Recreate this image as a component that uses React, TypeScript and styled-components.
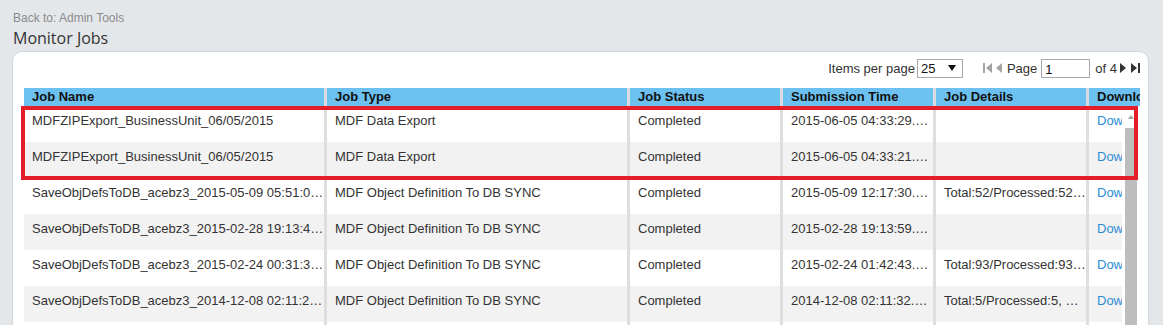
import React from 'react';
import styled, { createGlobalStyle } from 'styled-components';

const GlobalStyle = createGlobalStyle`
  html, body {
    margin: 0;
    padding: 0;
    height: 325px;
    overflow: hidden;
    background: #e4e7ea;
  }
`;

const COLUMNS = '303px 303px 153px 153px 153px 110px';

const Page = styled.div`
  padding: 11px 0 0 12px;
  font-family: "Liberation Sans", Arial, sans-serif;
`;

const BackLink = styled.div`
  font-size: 12px;
  line-height: 14px;
  color: #8b8b8b;
  margin-left: 1px;
`;

const Title = styled.h1`
  font-family: "Open Sans", "Liberation Sans", sans-serif;
  font-size: 16px;
  font-weight: 400;
  line-height: 20px;
  color: #333;
  margin: 3px 0 3px 1px;
`;

const Panel = styled.div`
  box-sizing: border-box;
  width: 1137px;
  height: 400px;
  background: #fff;
  border: 1px solid #d3d6da;
  border-radius: 10px 10px 0 0;
  padding: 5px 8px 0 11px;
`;

const Pager = styled.div`
  display: flex;
  justify-content: flex-end;
  align-items: center;
  height: 22px;
  margin-bottom: 9px;
  font-size: 13px;
  color: #333;
`;

const PagerText = styled.span<{ $ml?: number }>`
  margin-left: ${({ $ml = 0 }) => $ml}px;
`;

const Select = styled.div`
  box-sizing: border-box;
  width: 46px;
  height: 19px;
  margin-left: 2px;
  border: 1px solid #a9a9a9;
  display: flex;
  align-items: center;
  justify-content: space-between;
  padding: 0 6px 0 3px;
  font-size: 13px;
  color: #111;
`;

const Caret = styled.span`
  width: 0;
  height: 0;
  border-left: 4px solid transparent;
  border-right: 4px solid transparent;
  border-top: 6px solid #111;
`;

const PageInput = styled.div`
  box-sizing: border-box;
  width: 49px;
  height: 19px;
  margin-left: 4px;
  border: 1px solid #a9a9a9;
  padding: 2px 0 0 3px;
  font-size: 13px;
  line-height: 15px;
  color: #111;
`;

const NavIcon = styled.svg<{ $ml?: number }>`
  display: block;
  margin-left: ${({ $ml = 0 }) => $ml}px;
`;

const Table = styled.div`
  position: relative;
  width: 1116px;
`;

const HeaderRow = styled.div`
  display: grid;
  grid-template-columns: ${COLUMNS};
  height: 18px;
  overflow: hidden;
  background: #6cc1f0;
`;

const HeaderCell = styled.div`
  padding-left: 8px;
  font-size: 13px;
  font-weight: 700;
  line-height: 18px;
  color: #111;
  white-space: nowrap;
  overflow: hidden;
  &:not(:last-child) {
    border-right: 3px solid #d8dce0;
  }
`;

const BodyWrap = styled.div`
  display: flex;
`;

const Viewport = styled.div`
  width: 1098px;
  overflow: hidden;
`;

const BodyRow = styled.div<{ $alt: boolean }>`
  display: grid;
  grid-template-columns: ${COLUMNS};
  height: 36px;
  background: ${({ $alt }) => ($alt ? '#f2f2f2' : '#ffffff')};
`;

const BodyCell = styled.div`
  padding: 7px 0 0 8px;
  font-size: 13px;
  line-height: 15px;
  color: #333;
  white-space: nowrap;
  overflow: hidden;
  text-overflow: ellipsis;
  &:not(:last-child) {
    border-right: 3px solid #dedede;
  }
`;

const DownloadLink = styled.a`
  color: #2a8dd6;
  text-decoration: none;
`;

const Scrollbar = styled.div`
  width: 12px;
  margin: 0 3px 0 3px;
  display: flex;
  flex-direction: column;
`;

const ScrollArrow = styled.div`
  height: 22px;
  display: flex;
  justify-content: center;
  align-items: center;
  &::after {
    content: '';
    border-left: 3px solid transparent;
    border-right: 3px solid transparent;
    border-bottom: 4px solid #a5a5a5;
  }
`;

const Thumb = styled.div`
  flex: 1;
  background: #bdbdbd;
`;

const Highlight = styled.div`
  position: absolute;
  left: -3px;
  top: 18px;
  width: 1117px;
  height: 74px;
  box-sizing: border-box;
  border: 4px solid #e51d2a;
  pointer-events: none;
`;

interface Job {
  name: string;
  type: string;
  status: string;
  submitted: string;
  details: string;
}

const jobs: Job[] = [
  { name: 'MDFZIPExport_BusinessUnit_06/05/2015', type: 'MDF Data Export', status: 'Completed', submitted: '2015-06-05 04:33:29.183', details: '' },
  { name: 'MDFZIPExport_BusinessUnit_06/05/2015', type: 'MDF Data Export', status: 'Completed', submitted: '2015-06-05 04:33:21.547', details: '' },
  { name: 'SaveObjDefsToDB_acebz3_2015-05-09 05:51:07.216', type: 'MDF Object Definition To DB SYNC', status: 'Completed', submitted: '2015-05-09 12:17:30.423', details: 'Total:52/Processed:52, Failed:0' },
  { name: 'SaveObjDefsToDB_acebz3_2015-02-28 19:13:49.507', type: 'MDF Object Definition To DB SYNC', status: 'Completed', submitted: '2015-02-28 19:13:59.157', details: '' },
  { name: 'SaveObjDefsToDB_acebz3_2015-02-24 00:31:32.336', type: 'MDF Object Definition To DB SYNC', status: 'Completed', submitted: '2015-02-24 01:42:43.815', details: 'Total:93/Processed:93, Failed:0' },
  { name: 'SaveObjDefsToDB_acebz3_2014-12-08 02:11:22.754', type: 'MDF Object Definition To DB SYNC', status: 'Completed', submitted: '2014-12-08 02:11:32.176', details: 'Total:5/Processed:5, Failed:0' },
  { name: 'SaveObjDefsToDB_acebz3_2014-11-20 10:02:14.120', type: 'MDF Object Definition To DB SYNC', status: 'Completed', submitted: '2014-11-20 10:02:20.310', details: '' },
];

const headers = ['Job Name', 'Job Type', 'Job Status', 'Submission Time', 'Job Details', 'Download'];

export default function App() {
  return (
    <Page>
      <GlobalStyle />
      <BackLink>Back to: Admin Tools</BackLink>
      <Title>Monitor Jobs</Title>
      <Panel>
        <Pager>
          <PagerText>Items per page</PagerText>
          <Select>
            25
            <Caret />
          </Select>
          <NavIcon $ml={20} width="10" height="12" viewBox="0 0 10 12">
            <rect x="0" y="1" width="2" height="10" fill="#a3a3a3" />
            <polygon points="9,1 3,6 9,11" fill="#a3a3a3" />
          </NavIcon>
          <NavIcon $ml={2} width="8" height="12" viewBox="0 0 8 12">
            <polygon points="7,1 1,6 7,11" fill="#a3a3a3" />
          </NavIcon>
          <PagerText $ml={4}>Page</PagerText>
          <PageInput>1</PageInput>
          <PagerText $ml={5}>of 4</PagerText>
          <NavIcon $ml={2} width="8" height="12" viewBox="0 0 8 12">
            <polygon points="1,1 7,6 1,11" fill="#333" />
          </NavIcon>
          <NavIcon $ml={3} width="10" height="12" viewBox="0 0 10 12">
            <polygon points="1,1 7,6 1,11" fill="#333" />
            <rect x="8" y="1" width="2" height="10" fill="#333" />
          </NavIcon>
        </Pager>
        <Table>
          <HeaderRow>
            {headers.map((h) => (
              <HeaderCell key={h}>{h}</HeaderCell>
            ))}
          </HeaderRow>
          <BodyWrap>
            <Viewport>
              {jobs.map((job, i) => (
                <BodyRow key={i} $alt={i % 2 === 1}>
                  <BodyCell>{job.name}</BodyCell>
                  <BodyCell>{job.type}</BodyCell>
                  <BodyCell>{job.status}</BodyCell>
                  <BodyCell>{job.submitted}</BodyCell>
                  <BodyCell>{job.details}</BodyCell>
                  <BodyCell>
                    <DownloadLink href="#">Download</DownloadLink>
                  </BodyCell>
                </BodyRow>
              ))}
            </Viewport>
            <Scrollbar>
              <ScrollArrow />
              <Thumb />
            </Scrollbar>
          </BodyWrap>
          <Highlight />
        </Table>
      </Panel>
    </Page>
  );
}
